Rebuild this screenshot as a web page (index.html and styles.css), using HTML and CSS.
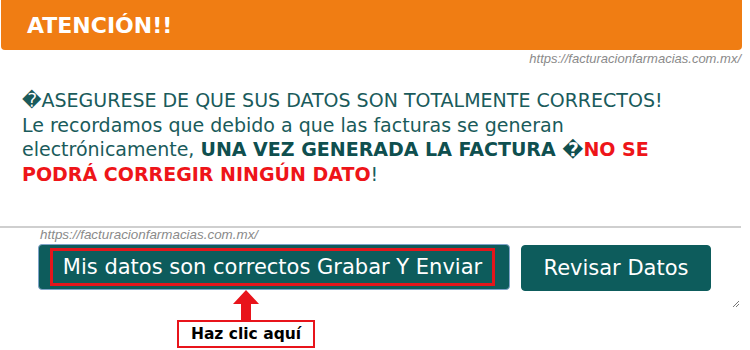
FILE: index.html
```html
<!DOCTYPE html>
<html lang="es">
<head>
  <meta charset="UTF-8">
  <title>Atención</title>
  <link rel="stylesheet" href="styles.css">
</head>
<body>
  <!-- Header -->
  <div class="alert-header">ATENCIÓN!!</div>
  <div class="watermark watermark-right">https://facturacionfarmacias.com.mx/</div>

  <!-- Message -->
  <p class="message">
    &#xFFFD;ASEGURESE DE QUE SUS DATOS SON TOTALMENTE CORRECTOS!<br>
    Le recordamos que debido a que las facturas se generan<br>
    electrónicamente, <b class="strong">UNA VEZ GENERADA LA FACTURA &#xFFFD;</b><b class="danger">NO SE<br>
    PODRÁ CORREGIR NINGÚN DATO</b>!
  </p>

  <!-- Actions -->
  <div class="actions">
    <div class="watermark watermark-left">https://facturacionfarmacias.com.mx/</div>
    <div class="button-row">
      <button class="btn btn-save"><span class="highlight">Mis datos son correctos Grabar Y Enviar</span></button>
      <button class="btn btn-review">Revisar Datos</button>
    </div>
    <div class="hint">
      <svg class="arrow" width="26" height="30" viewBox="0 0 26 30">
        <polygon points="13,0 26,14 18,14 18,30 8,30 8,14 0,14" fill="#e8141b"/>
      </svg>
      <div class="hint-label">Haz clic aquí</div>
    </div>
    <svg class="grip" width="8" height="8" viewBox="0 0 8 8">
      <line x1="1" y1="7" x2="7" y2="1" stroke="#777" stroke-width="1"/>
      <line x1="4" y1="7" x2="7" y2="4" stroke="#777" stroke-width="1"/>
    </svg>
  </div>
</body>
</html>
```

FILE: styles.css
```css
/* General */
body {
  margin: 0;
  background: #ffffff;
  font-family: 'DejaVu Sans', Verdana, sans-serif;
}

/* Header */
.alert-header {
  margin-left: 1px;
  width: 715px;
  height: 50px;
  padding-left: 26px;
  display: flex;
  align-items: center;
  background: #f07d13;
  border-radius: 0 0 4px 4px;
  color: #ffffff;
  font-size: 22px;
  font-weight: bold;
}

.watermark {
  font-family: 'Liberation Sans', Arial, sans-serif;
  font-style: italic;
  font-size: 13px;
  color: #8a8a8a;
}

.watermark-right {
  width: 741px;
  height: 18px;
  line-height: 18px;
  text-align: right;
}

/* Message */
.message {
  margin: 20px 0 0;
  padding-left: 22px;
  height: 138px;
  font-size: 19px;
  line-height: 24.5px;
  color: #1a5b5b;
}

.message .strong {
  color: #0f4f4f;
}

.message .danger {
  color: #ee1519;
}

/* Actions */
.actions {
  position: relative;
  width: 741px;
  height: 123px;
  border-top: 2px solid #cfcfcf;
}

.watermark-left {
  padding-left: 40px;
  height: 16px;
  line-height: 14px;
  font-size: 13.4px;
}

.button-row {
  display: flex;
  gap: 11px;
  padding-left: 38px;
}

.btn {
  height: 46px;
  background: #0d5c5c;
  color: #ffffff;
  font-family: 'DejaVu Sans', Verdana, sans-serif;
  font-size: 21px;
  border-radius: 4px;
  cursor: pointer;
}

.btn-save {
  width: 472px;
  padding: 3px 14px 3px 11px;
  border: 1px solid #7fa3c8;
}

.btn-save .highlight {
  display: flex;
  align-items: center;
  justify-content: center;
  height: 100%;
  border: 3px solid #e3161c;
  box-sizing: border-box;
  white-space: nowrap;
}

.btn-review {
  width: 190px;
  margin-top: 1px;
  padding: 0;
  border: 1px solid #0d5c5c;
}

.hint {
  display: flex;
  flex-direction: column;
  align-items: center;
  width: 138px;
  margin-left: 177px;
}

.arrow {
  display: block;
  margin-top: -1px;
}

.hint-label {
  width: 134px;
  height: 24px;
  line-height: 24px;
  margin-top: 0;
  border: 2px solid #e8141b;
  text-align: center;
  font-family: 'DejaVu Sans', sans-serif;
  font-weight: bold;
  font-size: 15.5px;
  color: #000000;
}

.grip {
  position: absolute;
  right: 1px;
  top: 72px;
}
```
